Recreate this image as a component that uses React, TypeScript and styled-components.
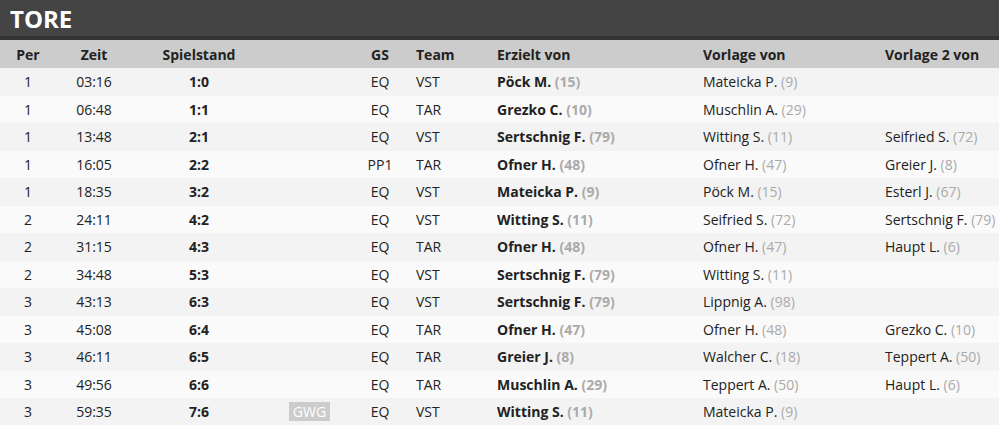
import React from "react";
import styled, { createGlobalStyle } from "styled-components";

const Global = createGlobalStyle`
  html, body { margin: 0; padding: 0; background: #ffffff; }
  body { font-family: "Open Sans", "DejaVu Sans", sans-serif; color: #222; }
`;

const COLS = "56px 76px 134px 87px 54px 81px 206px 182px 1fr";

const Panel = styled.section`
  width: 999px;
  overflow: hidden;
`;

const TitleBar = styled.h2`
  margin: 0;
  height: 36px;
  background: #444444;
  border-bottom: 4px solid #333333;
  color: #ffffff;
  font-size: 24px;
  font-weight: 700;
  line-height: 38px;
  padding: 0 10px;
`;

const Row = styled.div<{ $variant: "head" | "odd" | "even" }>`
  display: grid;
  grid-template-columns: ${COLS};
  align-items: center;
  height: ${(p) => (p.$variant === "head" ? "28px" : "27.5px")};
  background: ${(p) =>
    p.$variant === "head" ? "#cccccc" : p.$variant === "odd" ? "#f3f3f3" : "#fafafa"};
  font-size: 14px;
  font-weight: ${(p) => (p.$variant === "head" ? 700 : 400)};
  color: #222;
`;

const Cell = styled.div<{ $align?: "left" | "center"; $bold?: boolean }>`
  padding: 0 9px;
  text-align: ${(p) => p.$align || "left"};
  font-weight: ${(p) => (p.$bold ? 700 : "inherit")};
  white-space: nowrap;
  overflow: visible;
`;

const Num = styled.span`
  color: #aaaaaa;
`;

const Badge = styled.span`
  display: inline-block;
  background: #cccccc;
  color: #ffffff;
  font-size: 14px;
  line-height: 19px;
  padding: 0 4px;
`;

type Person = [string, number] | null;
type Goal = {
  per: number;
  time: string;
  score: string;
  gwg?: boolean;
  gs: string;
  team: string;
  scorer: Person;
  a1: Person;
  a2: Person;
};

const goals: Goal[] = [
  { per: 1, time: "03:16", score: "1:0", gs: "EQ", team: "VST", scorer: ["Pöck M.", 15], a1: ["Mateicka P.", 9], a2: null },
  { per: 1, time: "06:48", score: "1:1", gs: "EQ", team: "TAR", scorer: ["Grezko C.", 10], a1: ["Muschlin A.", 29], a2: null },
  { per: 1, time: "13:48", score: "2:1", gs: "EQ", team: "VST", scorer: ["Sertschnig F.", 79], a1: ["Witting S.", 11], a2: ["Seifried S.", 72] },
  { per: 1, time: "16:05", score: "2:2", gs: "PP1", team: "TAR", scorer: ["Ofner H.", 48], a1: ["Ofner H.", 47], a2: ["Greier J.", 8] },
  { per: 1, time: "18:35", score: "3:2", gs: "EQ", team: "VST", scorer: ["Mateicka P.", 9], a1: ["Pöck M.", 15], a2: ["Esterl J.", 67] },
  { per: 2, time: "24:11", score: "4:2", gs: "EQ", team: "VST", scorer: ["Witting S.", 11], a1: ["Seifried S.", 72], a2: ["Sertschnig F.", 79] },
  { per: 2, time: "31:15", score: "4:3", gs: "EQ", team: "TAR", scorer: ["Ofner H.", 48], a1: ["Ofner H.", 47], a2: ["Haupt L.", 6] },
  { per: 2, time: "34:48", score: "5:3", gs: "EQ", team: "VST", scorer: ["Sertschnig F.", 79], a1: ["Witting S.", 11], a2: null },
  { per: 3, time: "43:13", score: "6:3", gs: "EQ", team: "VST", scorer: ["Sertschnig F.", 79], a1: ["Lippnig A.", 98], a2: null },
  { per: 3, time: "45:08", score: "6:4", gs: "EQ", team: "TAR", scorer: ["Ofner H.", 47], a1: ["Ofner H.", 48], a2: ["Grezko C.", 10] },
  { per: 3, time: "46:11", score: "6:5", gs: "EQ", team: "TAR", scorer: ["Greier J.", 8], a1: ["Walcher C.", 18], a2: ["Teppert A.", 50] },
  { per: 3, time: "49:56", score: "6:6", gs: "EQ", team: "TAR", scorer: ["Muschlin A.", 29], a1: ["Teppert A.", 50], a2: ["Haupt L.", 6] },
  { per: 3, time: "59:35", score: "7:6", gwg: true, gs: "EQ", team: "VST", scorer: ["Witting S.", 11], a1: ["Mateicka P.", 9], a2: null },
];

const PersonText: React.FC<{ p: Person }> = ({ p }) =>
  p ? (
    <>
      {p[0]} <Num>({p[1]})</Num>
    </>
  ) : null;

export default function App() {
  return (
    <>
      <Global />
      <Panel>
        <TitleBar>TORE</TitleBar>
        <Row $variant="head">
          <Cell $align="center">Per</Cell>
          <Cell $align="center">Zeit</Cell>
          <Cell $align="center">Spielstand</Cell>
          <Cell $align="center"></Cell>
          <Cell $align="center">GS</Cell>
          <Cell>Team</Cell>
          <Cell>Erzielt von</Cell>
          <Cell>Vorlage von</Cell>
          <Cell>Vorlage 2 von</Cell>
        </Row>
        {goals.map((g, i) => (
          <Row key={i} $variant={i % 2 === 0 ? "odd" : "even"}>
            <Cell $align="center">{g.per}</Cell>
            <Cell $align="center">{g.time}</Cell>
            <Cell $align="center" $bold>{g.score}</Cell>
            <Cell $align="center">{g.gwg ? <Badge>GWG</Badge> : null}</Cell>
            <Cell $align="center">{g.gs}</Cell>
            <Cell>{g.team}</Cell>
            <Cell $bold><PersonText p={g.scorer} /></Cell>
            <Cell><PersonText p={g.a1} /></Cell>
            <Cell><PersonText p={g.a2} /></Cell>
          </Row>
        ))}
      </Panel>
    </>
  );
}
